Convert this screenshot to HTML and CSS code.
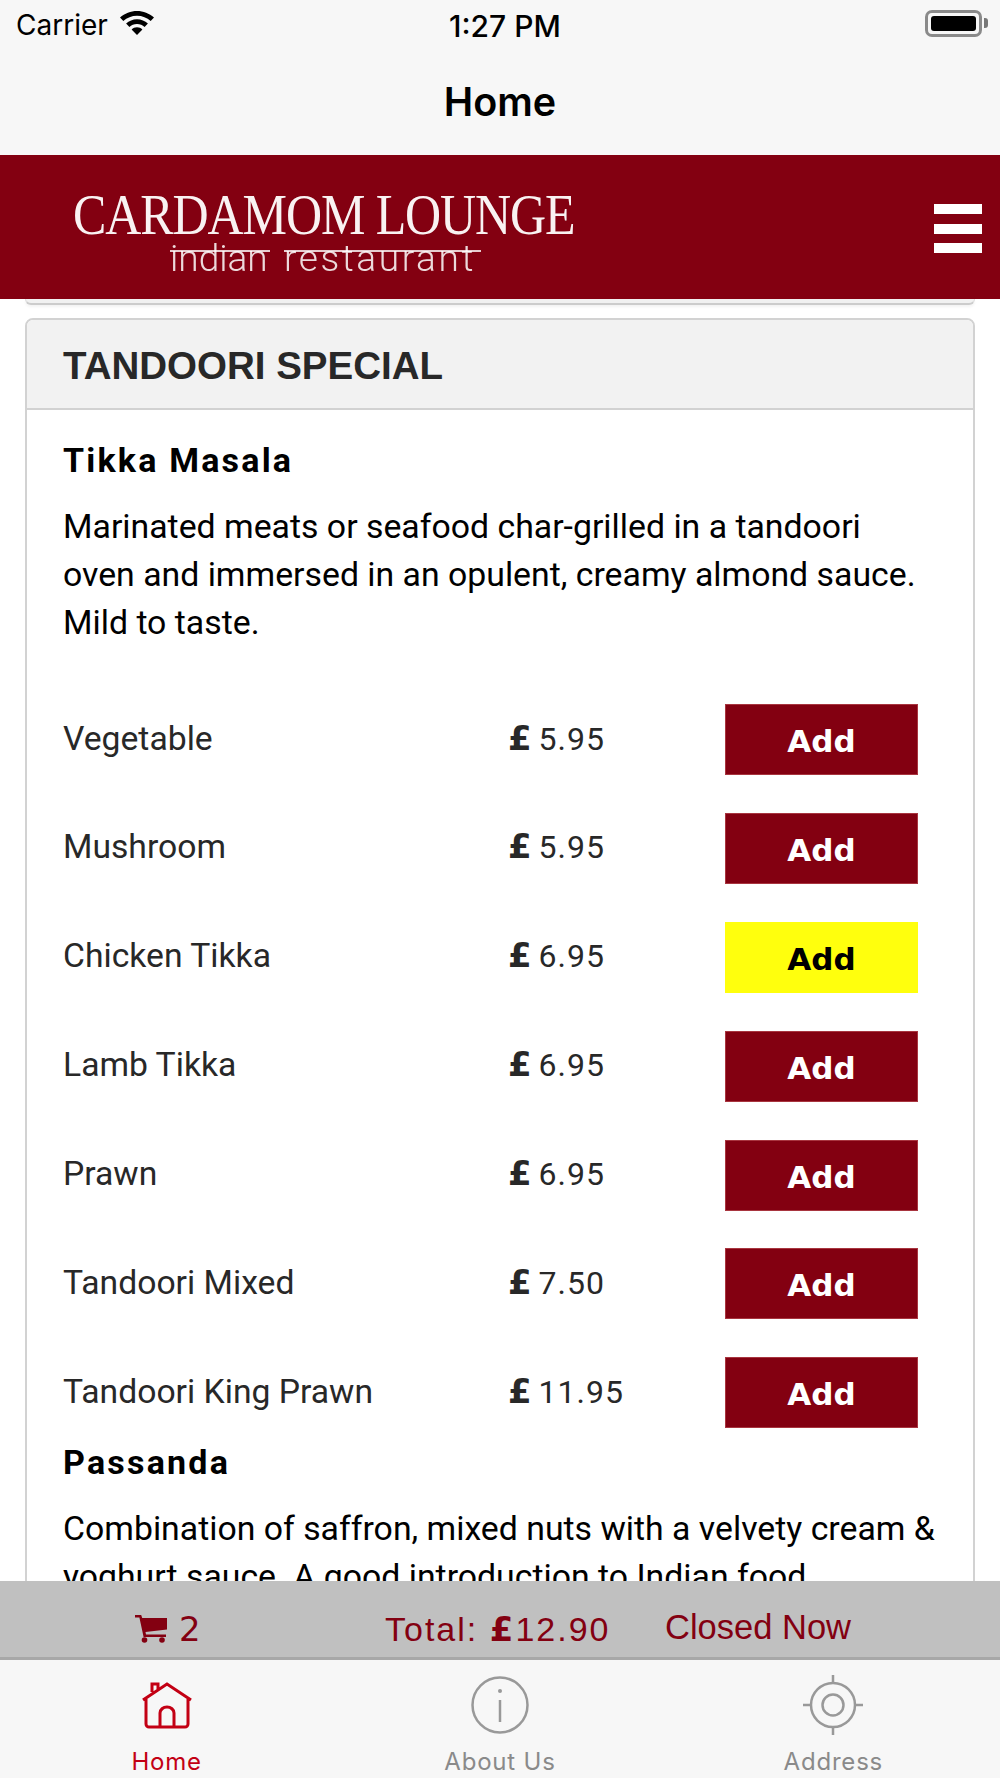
FILE: index.html
```html
<!DOCTYPE html>
<html lang="en">
<head>
<meta charset="utf-8">
<title>Home</title>
<link rel="stylesheet" href="styles.css">
</head>
<body>
<div class="app">
  <header class="topbar">
    <div class="status">
      <div class="status-left">
        <span class="carrier">Carrier</span>
        <svg class="wifi" viewBox="0 0 34 24" aria-hidden="true"><path d="M17 0C10.600 0 4.800 2.400 0 6.600l3.300 3.500C7 6.700 11.800 4.800 17 4.800s10 1.900 13.700 5.300L34 6.600C29.200 2.400 23.400 0 17 0z"/><path d="M17 8.200c-4.200 0-8 1.600-10.900 4.300l3.300 3.500C11.400 14.100 14 13 17 13s5.600 1.100 7.600 3l3.300-3.500C25 9.800 21.200 8.200 17 8.200z"/><path d="M17 16.300c-2.100 0-4 .8-5.400 2.100L17 24l5.400-5.600c-1.400-1.300-3.300-2.100-5.400-2.100z"/></svg>
      </div>
      <span class="time">1:27 PM</span>
      <div class="battery"><span class="battery-fill"></span><span class="battery-nub"></span></div>
    </div>
    <div class="nav-title">Home</div>
  </header>

  <div class="brand">
    <div class="logo">
      <div class="logo-main">CARDAMOM LOUNGE</div>
      <div class="logo-sub"><span class="word-a">indian</span><span class="word-b">restaurant</span></div>
    </div>
    <div class="burger"><span></span><span></span><span></span></div>
  </div>

  <main class="content">
    <div class="prev-card"></div>
    <section class="card">
      <h2 class="card-head">TANDOORI SPECIAL</h2>
      <div class="card-body">
        <h3 class="dish">Tikka Masala</h3>
        <p class="desc">Marinated meats or seafood char-grilled in a tandoori<br>oven and immersed in an opulent, creamy almond sauce.<br>Mild to taste.</p>
        <div class="rows">
          <div class="row"><span class="name">Vegetable</span><span class="price"><b class="gbp">£</b> 5.95</span><button class="add">Add</button></div>
          <div class="row"><span class="name">Mushroom</span><span class="price"><b class="gbp">£</b> 5.95</span><button class="add">Add</button></div>
          <div class="row"><span class="name">Chicken Tikka</span><span class="price"><b class="gbp">£</b> 6.95</span><button class="add active">Add</button></div>
          <div class="row"><span class="name">Lamb Tikka</span><span class="price"><b class="gbp">£</b> 6.95</span><button class="add">Add</button></div>
          <div class="row"><span class="name">Prawn</span><span class="price"><b class="gbp">£</b> 6.95</span><button class="add">Add</button></div>
          <div class="row"><span class="name">Tandoori Mixed</span><span class="price"><b class="gbp">£</b> 7.50</span><button class="add">Add</button></div>
          <div class="row"><span class="name">Tandoori King Prawn</span><span class="price"><b class="gbp">£</b> 11.95</span><button class="add">Add</button></div>
        </div>
        <h3 class="dish dish-next">Passanda</h3>
        <p class="desc">Combination of saffron, mixed nuts with a velvety cream &amp; yoghurt sauce. A good introduction to Indian food.</p>
      </div>
    </section>
  </main>

  <div class="cartbar">
    <div class="cart">
      <svg class="cart-icon" viewBox="0 0 32 28" aria-hidden="true"><path d="M0 0h6.200l1 3H32v11.500L10.500 17l.5 2.500h20V22H8.600L4.400 2.500H0z"/><circle cx="9.500" cy="25" r="2.800"/><circle cx="27" cy="25" r="2.800"/></svg>
      <span class="cart-count">2</span>
    </div>
    <div class="total">Total: <b class="gbp">£</b>12.90</div>
    <div class="closed">Closed Now</div>
  </div>

  <nav class="tabs">
    <div class="tab tab-on">
      <svg class="tab-icon" viewBox="0 0 60 60" aria-hidden="true"><path d="M6 25 30 9l24 16M9 22v27a3 3 0 0 0 3 3h36a3 3 0 0 0 3-3V22M23 52V38a7 6 0 0 1 14 0v14M15 17V9h6v5"/></svg>
      <span>Home</span>
    </div>
    <div class="tab">
      <svg class="tab-icon" viewBox="0 0 60 60" aria-hidden="true"><circle cx="30" cy="30" r="27.500"/><path d="M30 25v22"/><circle class="dot" cx="30" cy="16" r="2"/></svg>
      <span>About Us</span>
    </div>
    <div class="tab">
      <svg class="tab-icon" viewBox="0 0 60 60" aria-hidden="true"><circle cx="30" cy="30" r="22"/><circle cx="30" cy="30" r="10.500"/><path d="M30 0v8M30 52v8M0 30h8M52 30h8"/></svg>
      <span>Address</span>
    </div>
  </nav>
</div>
</body>
</html>
```

FILE: styles.css
```css
* { box-sizing: border-box; }
html, body { margin: 0; padding: 0; }
body { font-family: Roboto, "Liberation Sans", sans-serif; background: #fff; }
.app { width: 1000px; height: 1778px; display: flex; flex-direction: column; overflow: hidden; }

.topbar { height: 155px; background: #f7f7f7; flex: none; }
.status { height: 50px; display: flex; align-items: center; justify-content: space-between; padding: 0 18px 0 16px; position: relative; }
.status-left { display: flex; align-items: center; gap: 12px; }
.carrier { font: 400 28px/1 Inter, sans-serif; color: #000; }
.wifi { width: 34px; height: 24px; fill: #000; margin-top: -4px; }
.time { font: 500 30px/1 Inter, sans-serif; color: #000; position: absolute; left: 449px; top: 11px; }
.battery { width: 57px; height: 27px; border: 3px solid #8a8a8a; border-radius: 7px; padding: 3px; position: relative; margin-top: -4px; }
.battery-fill { display: block; height: 100%; background: #000; border-radius: 3px; }
.battery-nub { position: absolute; right: -9px; top: 5px; width: 4px; height: 10px; background: #777; border-radius: 0 3px 3px 0; }
.nav-title { text-align: center; font: 600 39.500px/1 Inter, sans-serif; color: #000; padding-top: 33px; }

.brand { height: 144px; flex: none; background: #830011; display: flex; align-items: flex-start; justify-content: space-between; padding: 31px 18px 0 73px; position: relative; z-index: 2; }
.logo { width: 505px; color: #fff; filter: blur(.4px); }
.logo-main { font: 400 50px/56px "Liberation Serif", serif; letter-spacing: -1.100px; white-space: nowrap; opacity: .95; height: 58px; padding-top: 3px; transform: scaleY(1.12); transform-origin: left 48px; }
.logo-sub { display: flex; gap: 14px; margin: 6px 0 0 97px; color: rgba(255,255,255,.85); font: 300 37px/14px Roboto, sans-serif; }
.logo-sub span { display: block; border-top: 2px solid rgba(255,255,255,.8); }
.word-a { width: 100px; }
.word-b { width: 197px; letter-spacing: 2.600px; }
.burger { display: flex; flex-direction: column; gap: 9.500px; width: 48px; margin-top: 18px; }
.burger span { display: block; height: 10px; background: #fff; }

.content { flex: 1; min-height: 0; overflow: hidden; padding: 0 25px; background: #fff; }
.prev-card { height: 6px; border: 1px solid #ddd; border-top: 0; border-bottom: 2px solid #ccc; border-radius: 0 0 6px 6px; background: #f1f1f1; box-shadow: 0 2px 3px rgba(0,0,0,.05); }
.card { margin-top: 13px; border: 2px solid #d2d2d2; border-radius: 8px; background: #fff; }
.card-head { margin: 0; height: 90px; background: #f2f2f2; border-bottom: 2px solid #d2d2d2; border-radius: 6px 6px 0 0; padding: 0 36px; font: 700 38.500px/92px "Liberation Sans", Arial, sans-serif; color: #282828; }
.card-body { padding: 30px 36px 0; }
.dish { margin: 0; font: 700 34px/40px Roboto, sans-serif; letter-spacing: 2.200px; color: #000; }
.desc { margin: 23px 0 0; font: 400 33.800px/48px Roboto, sans-serif; color: #000; }
.rows { margin-top: 57px; display: flex; flex-direction: column; gap: 37.900px; }
.row { display: grid; grid-template-columns: 445px 217px 193px; height: 71px; align-items: center; font: 400 33.700px/40px Roboto, sans-serif; color: #282828; }
.name { margin-top: -2px; }
.price { font-size: 32px; letter-spacing: 1px; word-spacing: -2px; margin-top: -3px; }
.gbp { font-family: "DejaVu Sans", sans-serif; font-weight: 700; }
.price .gbp { font-size: 34px; letter-spacing: 0; }
.add { height: 71px; width: 193px; border: 1px solid #a8353f; border-radius: 0; background: #830011; color: #fff; font: 700 31px/1 "DejaVu Sans", sans-serif; padding: 4px 0 0; }
.add.active { background: #ffff0d; border-color: #ffff0d; color: #000; }
.dish-next { margin-top: 14px; }

.cartbar { height: 79px; flex: none; background: #c0c0c0; border-bottom: 3px solid #a8a8a8; display: flex; color: #830011; align-items: center; padding-top: 20px; font-family: "Liberation Sans", sans-serif; }
.cart { display: flex; align-items: center; gap: 12px; margin-left: 135px; width: 250px; }
.cart-icon { width: 32px; height: 28px; fill: #830011; }
.cart-count { font: 400 34px/1 "DejaVu Sans", sans-serif; }
.total { width: 280px; font: 400 34px/1 "Liberation Sans", sans-serif; letter-spacing: 2px; white-space: nowrap; }
.closed { font: 400 34.500px/1 "Liberation Sans", sans-serif; margin-top: -4px; white-space: nowrap; }

.tabs { height: 118px; flex: none; background: #f7f7f7; display: grid; grid-template-columns: repeat(3, 1fr); }
.tab { display: flex; flex-direction: column; align-items: center; color: #8a8a8a; font: 400 24px/28px Inter, sans-serif; letter-spacing: .8px; }
.tab-icon { width: 60px; height: 60px; margin-top: 15px; fill: none; stroke: #999; stroke-width: 2.500; }
.tab .dot { fill: #999; stroke: none; }
.tab span { margin-top: 13px; }
.tab-on { color: #c30014; }
.tab-on .tab-icon { stroke: #c30014; stroke-width: 3; }
```
